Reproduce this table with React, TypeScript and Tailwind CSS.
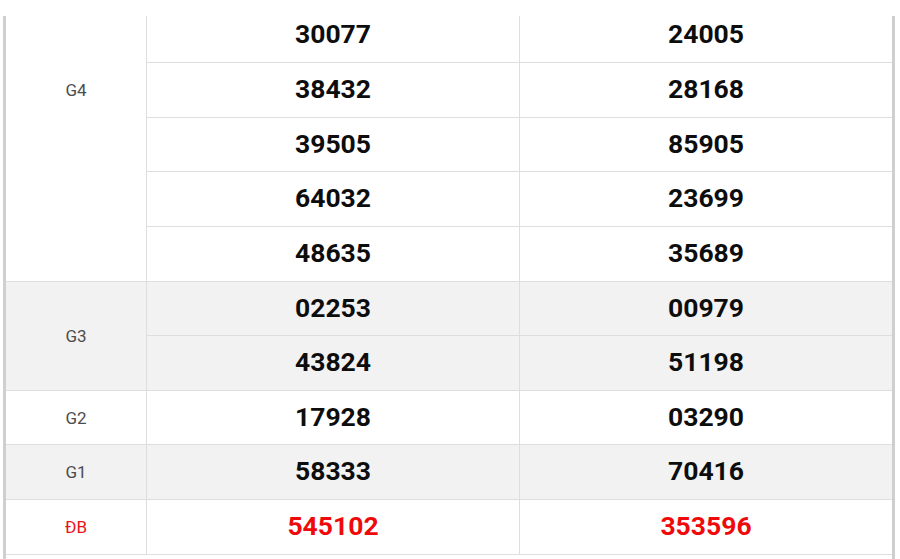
const ROW_H = [55, 55, 54, 55, 55, 54, 55, 54, 55, 55];

type Group = { label: string; rows: [string, string][]; shade?: boolean; special?: boolean; labelTop?: number };

const GROUPS: Group[] = [
  {
    label: "G4",
    labelTop: 72,
    rows: [
      ["30077", "24005"],
      ["38432", "28168"],
      ["39505", "85905"],
      ["64032", "23699"],
      ["48635", "35689"],
    ],
  },
  {
    label: "G3",
    shade: true,
    rows: [
      ["02253", "00979"],
      ["43824", "51198"],
    ],
  },
  { label: "G2", rows: [["17928", "03290"]] },
  { label: "G1", shade: true, rows: [["58333", "70416"]] },
  { label: "ĐB", special: true, rows: [["545102", "353596"]] },
];

export default function App() {
  let idx = 0;
  return (
    <div
      className="w-[900px] h-[559px] bg-white overflow-hidden"
      style={{ fontFamily: "Roboto, 'Liberation Sans', sans-serif" }}
    >
      <div className="mt-4 ml-[3px] w-[892px] h-[543px] overflow-hidden border-l-[3px] border-r-[3px] border-[#cfcfcf]">
        <div className="-mt-[8px]">
          {GROUPS.map((g) => (
            <div
              key={g.label}
              className={`flex border-b border-[#dedede] ${g.shade ? "bg-[#f2f2f2]" : "bg-white"}`}
            >
              <div
                className={`w-[141px] shrink-0 border-r border-[#dedede] flex justify-center text-[17px] leading-[20px] ${
                  g.labelTop ? "items-start" : "items-center"
                } ${g.special ? "text-[#e8141b]" : "text-[#4d4d4d]"}`}
                style={g.labelTop ? { paddingTop: g.labelTop } : undefined}
              >
                {g.label}
              </div>
              <div className="flex-1 flex flex-col">
                {g.rows.map((r, i) => {
                  const h = ROW_H[idx++];
                  const last = i === g.rows.length - 1;
                  const color = g.special ? "text-[#ee0a0a]" : "text-[#0d0d0d]";
                  return (
                    <div
                      key={i}
                      className={`flex ${last ? "" : "border-b border-[#dedede]"}`}
                      style={{ height: last ? h - 1 : h }}
                    >
                      <div
                        className={`w-[373px] border-r border-[#dedede] flex items-center justify-center pb-[2px] text-[26.5px] font-bold ${color}`}
                      >
                        {r[0]}
                      </div>
                      <div className={`flex-1 flex items-center justify-center pb-[2px] text-[26.5px] font-bold ${color}`}>
                        {r[1]}
                      </div>
                    </div>
                  );
                })}
              </div>
            </div>
          ))}
          <div className="h-[20px] bg-white" />
        </div>
      </div>
    </div>
  );
}
